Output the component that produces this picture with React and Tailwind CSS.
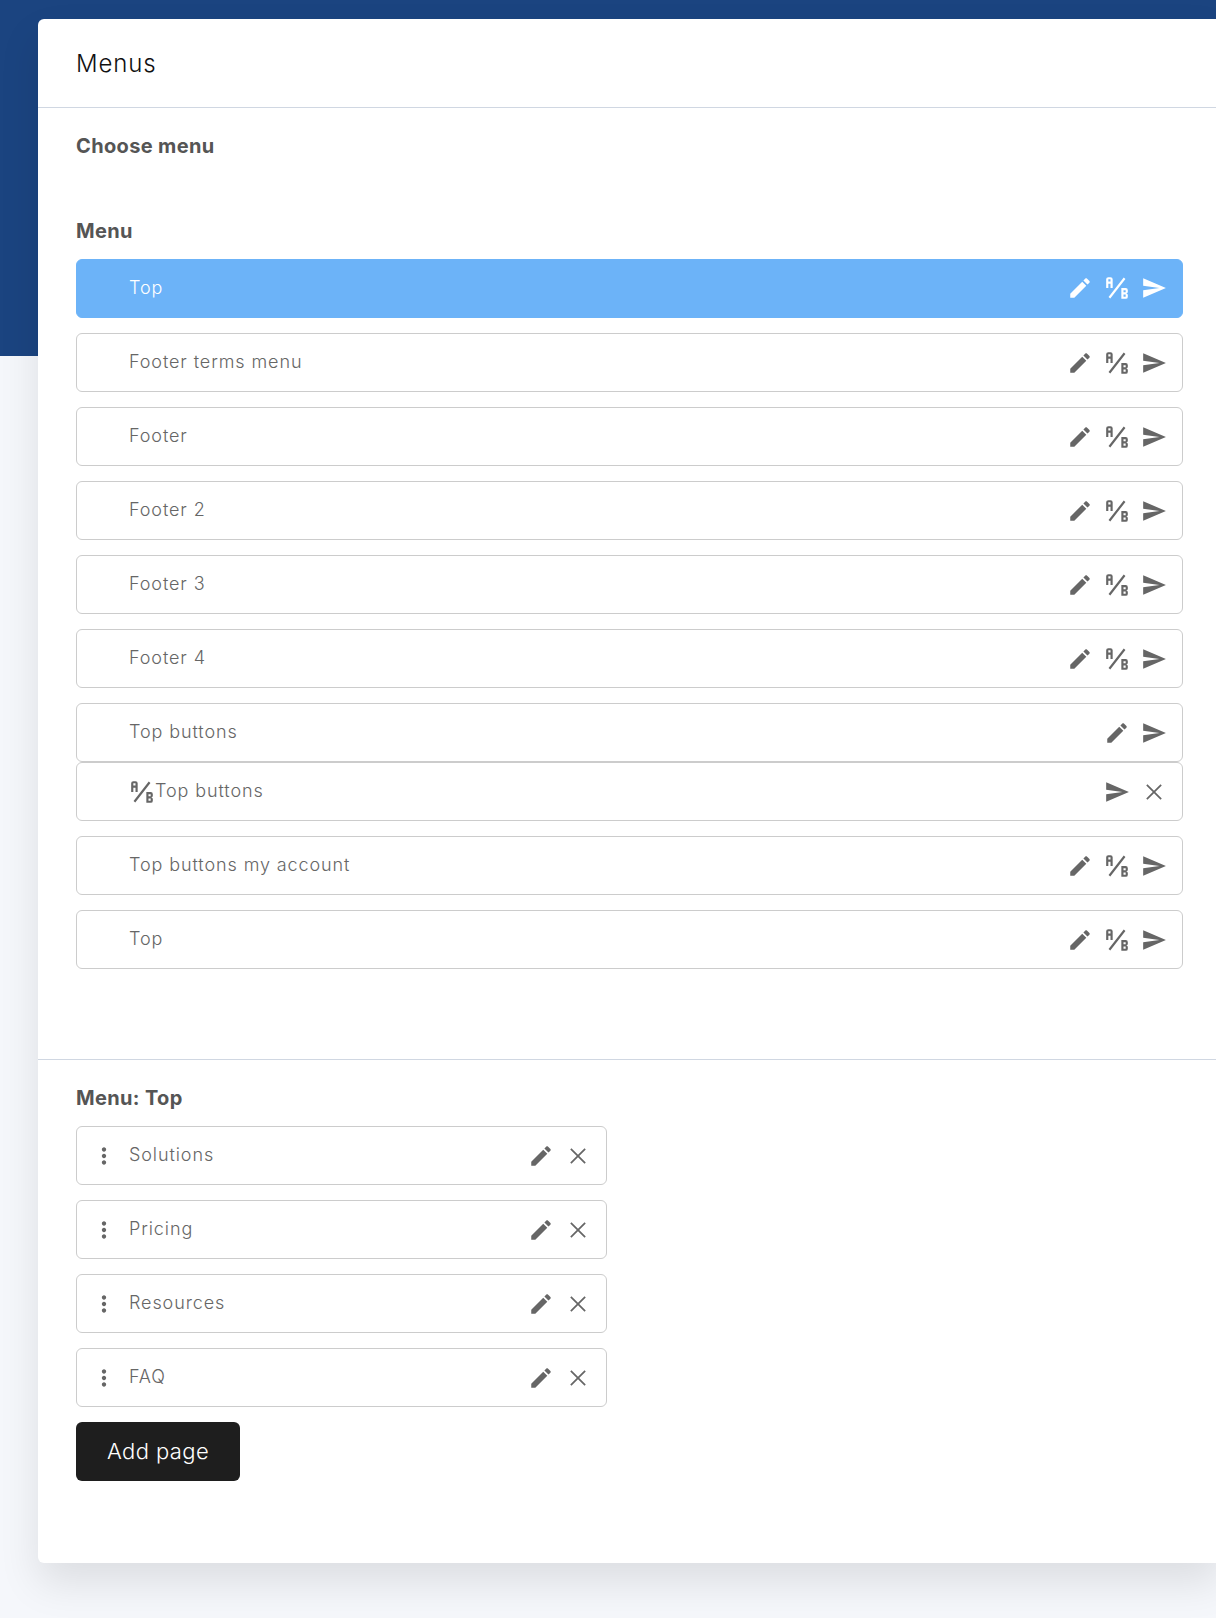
import React from "react";

const editPath = "M3 17.25V21h3.75L17.81 9.94l-3.75-3.75L3 17.25zM20.71 7.04c.39-.39.39-1.02 0-1.41l-2.34-2.34c-.39-.39-1.02-.39-1.41 0l-1.83 1.83 3.75 3.75 1.83-1.83z";
const sendPath = "M2.01 21L23 12 2.01 3 2 10l15 2-15 2z";
const abPath = "M4 2A2 2 0 0 0 2 4V12H4V8H6V12H8V4A2 2 0 0 0 6 2H4M4 4H6V6H4M22 15.5V14A2 2 0 0 0 20 12H16V22H20A2 2 0 0 0 22 20V18.5A1.54 1.54 0 0 0 20.5 17A1.54 1.54 0 0 0 22 15.5M20 20H18V18H20V20M20 16H18V14H20M5.79 21.61L4.21 20.39L18.21 2.39L19.79 3.61Z";
const dotsPath = "M12 8c1.1 0 2-.9 2-2s-.9-2-2-2-2 .9-2 2 .9 2 2 2zm0 2c-1.1 0-2 .9-2 2s.9 2 2 2 2-.9 2-2-.9-2-2-2zm0 6c-1.1 0-2 .9-2 2s.9 2 2 2 2-.9 2-2-.9-2-2-2z";

function Icon({ d, className = "w-[26px] h-[26px]" }) {
  return (
    <svg viewBox="0 0 24 24" className={className} fill="currentColor">
      <path d={d} />
    </svg>
  );
}

function CloseIcon() {
  return (
    <svg viewBox="0 0 24 24" className="w-[26px] h-[26px]" fill="none" stroke="currentColor" strokeWidth="1.6">
      <path d="M5.4 5.4L18.6 18.6M18.6 5.4L5.4 18.6" />
    </svg>
  );
}

function MenuRow({ label, active, icons, ab, drag }) {
  return (
    <div
      className={`h-[59px] flex items-center rounded-[6px] border pl-[15px] pr-[15px] ${
        active ? "bg-[#6cb3f8] border-[#6cb3f8] text-white" : "bg-white border-[#cccccc] text-[#666666]"
      }`}
    >
      <span className="w-[24px] h-[24px] mr-[13px] flex items-center justify-center">
        {drag && <Icon d={dotsPath} className="w-[26px] h-[26px] shrink-0" />}
      </span>
      {ab && <Icon d={abPath} className="w-[26px] h-[26px]" />}
      <span className="text-[18px] leading-[24px] -mt-[2px] tracking-[0.9px] font-[350]">{label}</span>
      <div className={`ml-auto flex items-center gap-[11px] ${active ? "-mt-[2px]" : "mt-[1px]"}`}>
        {icons.map((name) =>
          name === "close" ? (
            <CloseIcon key={name} />
          ) : (
            <Icon key={name} d={{ edit: editPath, ab: abPath, send: sendPath }[name]} />
          )
        )}
      </div>
    </div>
  );
}

const menus = [
  { label: "Top", active: true },
  { label: "Footer terms menu" },
  { label: "Footer" },
  { label: "Footer 2" },
  { label: "Footer 3" },
  { label: "Footer 4" },
];
const all = ["edit", "ab", "send"];

export default function App() {
  return (
    <div
      className="relative w-[1216px] h-[1618px] overflow-hidden bg-[#f5f7fb]"
      style={{ fontFamily: '"Inter", "Noto Sans", sans-serif' }}
    >
      <div className="absolute top-0 left-0 w-full h-[356px] bg-[#1b4480]" />
      <div className="relative ml-[38px] mt-[19px] pt-px w-[1183px] h-[1544px] bg-white rounded-[6px] shadow-[0_20px_40px_rgba(0,0,0,0.1)]">
        <div className="h-[88px] border-b border-[#d0d7e2] pl-[38px] flex items-center">
          <h1 className="text-[24px] font-[350] text-[#111111] tracking-[0.9px]">Menus</h1>
        </div>
        <div className="px-[38px] pt-[26px] border-b border-[#d0d7e2] h-[952px]">
          <h2 className="text-[20px] leading-[24px] font-bold tracking-[0.35px] text-[#555555]">Choose menu</h2>
          <h2 className="mt-[61px] mb-[16px] text-[20px] leading-[24px] font-bold tracking-[0.35px] text-[#555555]">Menu</h2>
          <div className="flex flex-col gap-[15px]">
            {menus.map((m) => (
              <MenuRow key={m.label} label={m.label} active={m.active} icons={all} />
            ))}
            <div className="flex flex-col">
              <MenuRow label="Top buttons" icons={["edit", "send"]} />
              <MenuRow label="Top buttons" ab icons={["send", "close"]} />
            </div>
            <MenuRow label="Top buttons my account" icons={all} />
            <MenuRow label="Top" icons={all} />
          </div>
        </div>
        <div className="px-[38px] pt-[26px]">
          <h2 className="mb-[16px] text-[20px] leading-[24px] font-bold tracking-[0.35px] text-[#555555]">Menu: Top</h2>
          <div className="w-[531px] flex flex-col gap-[15px]">
            {["Solutions", "Pricing", "Resources", "FAQ"].map((p) => (
              <MenuRow key={p} label={p} drag icons={["edit", "close"]} />
            ))}
          </div>
          <button className="mt-[15px] w-[164px] h-[59px] rounded-[6px] bg-[#1e1e1e] text-white text-[22px] font-[350] tracking-[0.4px]">
            Add page
          </button>
        </div>
      </div>
    </div>
  );
}
